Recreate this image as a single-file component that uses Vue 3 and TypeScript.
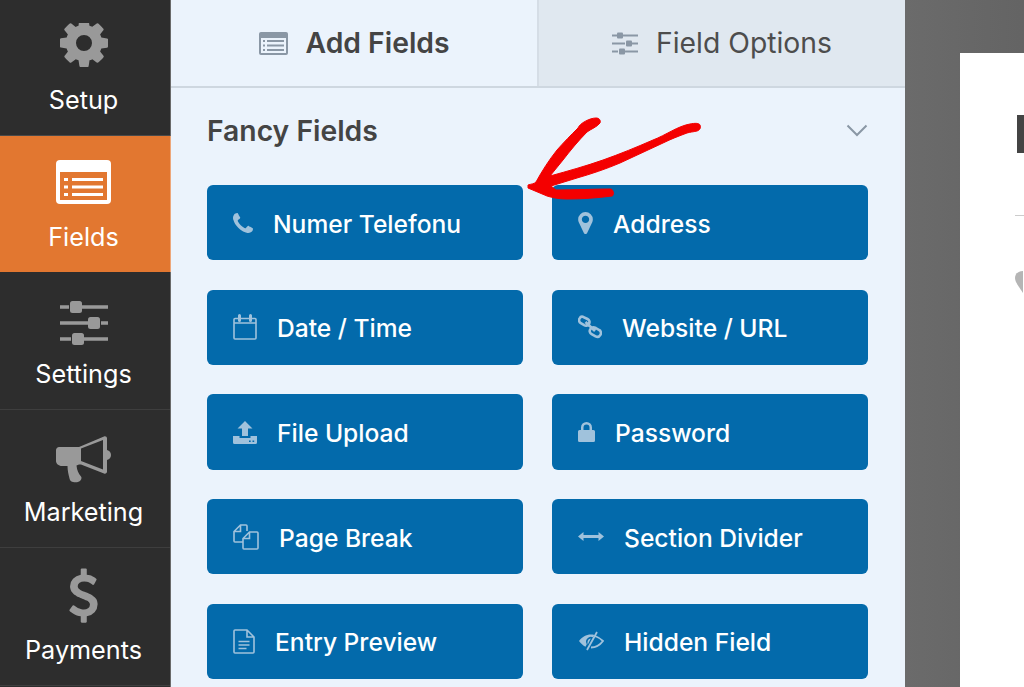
<script setup lang="ts">
interface IField {
  label: string
  w: number
  h: number
  vb: string
  fill?: string
  line?: string
  sw?: number
}

const phone = 'M1408 1112q0 27-10 70.5t-21 68.5q-21 50-122 106-94 51-186 51-27 0-53-3.5t-57.5-12.5-47-14.5-55.5-20.5-49-18q-98-35-175-83-127-79-264-216t-216-264q-48-77-83-175-3-9-18-49t-20.5-55.5-14.5-47-12.5-57.5-3.5-53q0-92 51-186 56-101 106-122 25-11 68.5-21t70.5-10q14 0 21 3 18 6 53 76 11 19 30 54t35 63.5 31 53.5q3 4 17.5 25t21.5 35.5 7 28.5q0 20-28.5 50t-62 55-62 53-28.5 46q0 9 5 22.5t8.5 20.5 14 24 11.5 19q76 137 174 235t235 174q2 1 19 11.5t24 14 20.5 8.5 22.5 5q18 0 46-28.5t53-62 55-62 50-28.5q14 0 28.5 7t35.5 21.5 25 17.5q25 15 53.5 31t63.5 35 54 30q70 35 76 53 3 7 3 21z'
const marker = 'M768 640q0-106-75-181t-181-75-181 75-75 181 75 181 181 75 181-75 75-181zm256 0q0 109-33 179l-364 774q-16 33-47.5 52t-67.5 19-67.5-19-46.5-52l-365-774q-33-70-33-179 0-212 150-362t362-150 362 150 150 362z'
const cog = 'M1024 640q0-106-75-181t-181-75-181 75-75 181 75 181 181 75 181-75 75-181zm512-109v222q0 12-8 23t-20 13l-185 28q-19 54-39 91 35 50 107 138 10 12 10 25t-9 23q-27 37-99 108t-94 71q-12 0-26-9l-138-108q-44 23-91 38-16 136-29 186-7 28-36 28h-222q-14 0-24.5-8.5t-11.5-21.5l-28-184q-49-16-90-37l-141 107q-10 9-25 9-14 0-25-11-126-114-165-168-7-10-7-23 0-12 8-23 15-21 51-66.5t54-70.5q-27-50-41-99l-183-27q-13-2-21-12.5t-8-23.5v-222q0-12 8-23t19-13l186-28q14-46 39-92-40-57-107-138-10-12-10-24 0-10 9-23 26-36 98.5-107.5t94.5-71.5q13 0 26 10l138 107q44-23 91-38 16-136 29-186 7-28 36-28h222q14 0 24.5 8.5t11.5 21.5l28 184q49 16 90 37l142-107q9-9 24-9 13 0 25 10 129 119 165 170 7 8 7 22 0 12-8 23-15 21-51 66.5t-54 70.5q26 50 41 98l183 28q13 2 21 12.5t8 23.5z'
const dollar = 'M978 1185q0 153-99.5 263.5t-258.5 136.5v175q0 14-9 23t-23 9h-135q-13 0-22.5-9.5t-9.5-22.5v-175q-66-9-127.5-31t-101.5-44.5-74-48-46.5-37.5-17.5-18q-17-21-2-41l103-135q7-10 23-12 15-2 24 9l2 2q113 99 243 125 37 8 74 8 81 0 142.5-43t61.5-122q0-28-15-53t-33.5-42-58.5-37.5-66-32-80-32.5q-39-16-61.5-25t-61.5-26.5-62.5-31-56.5-35.5-53.5-42.5-43.5-49-35.5-58-21-66.5-8.5-78q0-138 98-242t255-134v-180q0-13 9.5-22.5t22.5-9.5h135q14 0 23 9t9 23v176q57 6 110.5 23t87 33.5 63.5 37.5 39 29 15 14q17 18 5 38l-81 146q-8 15-23 16-14 3-27-7-3-3-14.5-12t-39-26.5-58.5-32-74.5-26-85.5-11.5q-95 0-155 43t-60 111q0 26 8.5 48t29.5 41.5 39.5 33 56 31 60.5 27 70 27.5q53 20 81 31.5t76 35 75.5 42.5 62 50 53 63.5 31.5 76.5 13 94z'

const fieldList: IField[] = [
  { label: 'Numer Telefonu', w: 20, h: 20, vb: '0 0 1408 1408', fill: phone },
  { label: 'Address', w: 15, h: 22, vb: '0 128 1024 1536', fill: marker },
  {
    label: 'Date / Time', w: 24, h: 26, vb: '0 0 24 26', sw: 1.6,
    line: 'M2 4.5h20a1 1 0 0 1 1 1v18.5a1 1 0 0 1-1 1H2a1 1 0 0 1-1-1V5.5a1 1 0 0 1 1-1zM1 9h22',
    fill: 'M5 1.500a1.500 1.500 0 0 1 3 0v5a1.500 1.500 0 0 1-3 0zM16 1.500a1.500 1.500 0 0 1 3 0v5a1.500 1.500 0 0 1-3 0z'
  },
  {
    label: 'Website / URL', w: 24, h: 24, vb: '0 0 24 24', sw: 2.6,
    line: 'M5 1.800l4.500 2.200c2 1 2.500 3 1.500 4.800-1 1.800-3 2.400-4.800 1.400L2.800 8.200C1 7.200.6 5 1.600 3.300 2.400 1.800 3.500 1.300 5 1.800zM15 13.500l3.500 0M17.800 13l3.400 2c1.800 1 2.200 3.200 1.200 4.900-1 1.700-3 2.400-4.800 1.400l-4-2.200c-1.800-1-2.400-3-1.400-4.800 1-1.700 3.400-2.300 5.600-1.300zM7.500 7l9.500 9'
  },
  {
    label: 'File Upload', w: 24, h: 23, vb: '0 0 24 23',
    fill: 'M12 0l7.500 7.500h-4.500v7.500h-6V7.500H4.500zM0 15h6.500v2h11v-2H24v6.500a1.500 1.500 0 0 1-1.500 1.500h-21A1.500 1.500 0 0 1 0 21.500zM16 19.500v1.500h1.700v-1.500zM19.500 19.500v1.500h1.700v-1.500z'
  },
  {
    label: 'Password', w: 17, h: 20, vb: '0 0 17 20',
    fill: 'M3 8V5.500a5.500 5.500 0 0 1 11 0V8h1.500A1.500 1.500 0 0 1 17 9.500v9a1.500 1.500 0 0 1-1.500 1.500h-14A1.500 1.500 0 0 1 0 18.500v-9A1.500 1.500 0 0 1 1.500 8zM5.500 8h6V5.500a3 3 0 0 0-6 0z'
  },
  {
    label: 'Page Break', w: 26, h: 26, vb: '0 0 26 26', sw: 1.6,
    line: 'M10 18H2a1 1 0 0 1-1-1V7.500L7.500 1H13a1 1 0 0 1 1 1v5M7.500 1.500V7.500H1.500M11 25a1 1 0 0 1-1-1V14.500L16.500 8H24a1 1 0 0 1 1 1v15a1 1 0 0 1-1 1zM16.500 8.500V14.500H10.500'
  },
  {
    label: 'Section Divider', w: 26, h: 9, vb: '0 0 26 9',
    fill: 'M0 4.500L5.500 0v3h15V0L26 4.500 20.500 9V6h-15v3z'
  },
  {
    label: 'Entry Preview', w: 22, h: 25, vb: '0 0 22 25', sw: 1.6,
    line: 'M2 1h12l7 7v15a1 1 0 0 1-1 1H2a1 1 0 0 1-1-1V2a1 1 0 0 1 1-1zM14 1v7h7M5.500 12.500h11M5.500 16h11M5.500 19.500h8'
  },
  {
    label: 'Hidden Field', w: 26, h: 20, vb: '0 0 26 20', sw: 1.8,
    line: 'M17 5c3.500 1.300 6 3 8 5-3 4-7 6.500-12 6.500M19 1L9 19',
    fill: 'M1 10c3-4 7-6.500 12-6.500 1.200 0 2.300.1 3.400.4L15 6.300A5 5 0 0 0 8 10c0 1.200.3 2.300.8 3.300L7.500 15.800C5 14.600 2.800 12.400 1 10zM10 9.300c.6-1 1.600-1.600 2.800-1.700l-3 6c-.5-1.500-.4-3 .2-4.300z'
  }
]
</script>

<template>
  <div class="builder">
    <aside class="sidebar">
      <div class="side-item side-item--first">
        <svg class="side-icon" width="48" height="48" viewBox="0 0 1536 1536"><path :d="cog" fill="currentColor" /></svg>
        <span>Setup</span>
      </div>
      <div class="side-item side-item--active">
        <svg class="side-icon" width="55" height="44" viewBox="0 0 55 44">
          <rect width="55" height="44" rx="4" fill="#fff" />
          <rect x="4" y="12" width="47" height="28" fill="#e27730" />
          <path d="M8 18h4v3H8zM8 25.500h4v3H8zM8 33h4v3H8zM16 18h31v3H16zM16 25.500h31v3H16zM16 33h31v3H16z" fill="#fff" />
        </svg>
        <span>Fields</span>
      </div>
      <div class="side-item">
        <svg class="side-icon" width="48" height="46" viewBox="0 0 48 46">
          <path d="M0 6h9M22 6h26M0 22h28M41 22h7M0 38h11M24 38h24" stroke="currentColor" stroke-width="3.500" />
          <rect x="10" y="0" width="12" height="12" rx="2.500" fill="currentColor" />
          <rect x="28" y="16" width="12" height="12" rx="2.500" fill="currentColor" />
          <rect x="12" y="32" width="12" height="12" rx="2.500" fill="currentColor" />
        </svg>
        <span>Settings</span>
      </div>
      <div class="side-item">
        <svg class="side-icon side-icon--market" width="55" height="47" viewBox="0 0 55 47">
          <path fill="currentColor" fill-rule="evenodd" d="M3 11h20L48 .5c1.500-.6 3 .3 3 2V14c2.500.5 4 2.500 4 5s-1.500 4.500-4 5v11.500c0 1.700-1.500 2.600-3 2L25 28.500h-2l-2.500 1c.5 5 2 8 4.500 11 1 1.500 .5 3-1 4.500-2 1.500-4.500 1.500-7 1-2.500-.5-3-1.500-3.500-3.500-1-4-2-8-2-12.500H6c-3.500 0-6-2.500-6-5V14c0-1.500 1.500-3 3-3zM25 12.500V25L47 33.500V4z" />
        </svg>
        <span>Marketing</span>
      </div>
      <div class="side-item">
        <svg class="side-icon side-icon--money" width="31" height="59" viewBox="0 0 1024 1792"><path :d="dollar" fill="currentColor" /></svg>
        <span>Payments</span>
      </div>
    </aside>

    <main class="panel">
      <div class="tabs">
        <div class="tab tab--active">
          <svg width="29" height="23" viewBox="0 0 29 23">
            <rect width="29" height="23" rx="2" fill="currentColor" />
            <rect x="2" y="6" width="25" height="15" fill="#ebf3fc" />
            <path d="M4 8h2v2H4zM4 12.500h2v2H4zM4 17h2v2H4zM8 8h17v2H8zM8 12.500h17v2H8zM8 17h17v2H8z" fill="currentColor" />
          </svg>
          <span>Add Fields</span>
        </div>
        <div class="tab">
          <svg width="26" height="23" viewBox="0 0 26 23">
            <path d="M0 3.500h5M11 3.500h15M0 11.500h13M19 11.500h7M0 19.500h6M12 19.500h14" stroke="currentColor" stroke-width="2" />
            <rect x="5" y="0.500" width="6" height="6" rx="1" fill="currentColor" />
            <rect x="14" y="8.500" width="6" height="6" rx="1" fill="currentColor" />
            <rect x="7" y="16.500" width="6" height="6" rx="1" fill="currentColor" />
          </svg>
          <span>Field Options</span>
        </div>
      </div>

      <div class="section">
        <div class="section__head">
          <h2>Fancy Fields</h2>
          <svg width="22" height="13" viewBox="0 0 22 13"><path d="M1.500 1.500L11 11l9.500-9.500" fill="none" stroke="currentColor" stroke-width="2" /></svg>
        </div>
        <div class="field-grid">
          <button v-for="item in fieldList" :key="item.label" class="field-btn">
            <svg :width="item.w" :height="item.h" :viewBox="item.vb">
              <path v-if="item.fill" :d="item.fill" fill="currentColor" fill-rule="evenodd" />
              <path v-if="item.line" :d="item.line" fill="none" stroke="currentColor" :stroke-width="item.sw" />
            </svg>
            <span>{{ item.label }}</span>
          </button>
        </div>
      </div>
    </main>

    <section class="preview">
      <div class="sheet">
        <div class="sheet__title"></div>
        <div class="sheet__rule"></div>
        <svg class="sheet__blob" width="8" height="26" viewBox="0 0 8 26"><path d="M8 0C3 0 0 3 0 7c0 3 2 6 4 9l4 6z" fill="#b5b5b5" /></svg>
      </div>
    </section>

    <svg class="arrow" width="1024" height="687" viewBox="0 0 1024 687">
      <path
        fill="#f40000"
        stroke="#f40000"
        stroke-width="1"
        stroke-linejoin="round"
        d="M596 118C599 118 601 120 600 123C597 127 591 129 587 132C578 141 570 151 563 160L550 176C568 171 586 166 603 160C620 154 637 147 653 140C666 135 678 126 690 124C695 123 699 123 700 125C701 128 700 130 697 131C693 132 690 132 687 133C679 136 671 139 663 143L620 163C606 169 591 174 577 178L551 186L556 190C575 190 594 189 611 189C614 190 614 196 612 196C597 198 582 199 567 199C560 199 553 198 547 196L528 188L528 185C531 184 534 184 536 182C542 171 549 160 557 150C564 142 571 135 578 128C580 123 590 118 596 118Z"
      />
    </svg>
  </div>
</template>

<style scoped>
.builder {
  display: flex;
  position: relative;
  width: 1024px;
  height: 687px;
  overflow: hidden;
  font-family: Inter, "Liberation Sans", sans-serif;
}
.sidebar {
  width: 171px;
  flex: none;
  background-color: #2d2d2d;
  border-right: 1px solid #6a6a6a;
  box-sizing: border-box;
}
.side-item {
  height: 138px;
  box-sizing: border-box;
  display: flex;
  flex-direction: column;
  align-items: center;
  border-bottom: 1px solid #3e3e3e;
  padding: 29px 3px 0 0;
  color: #999;
}
.side-item span {
  color: #fff;
  font-size: 25.2px;
  line-height: 30px;
  margin-top: auto;
  margin-bottom: 20px;
}
.side-icon--market {
  margin-top: -3px;
}
.side-icon--money {
  margin-top: -11px;
}
.side-item--first {
  height: 136px;
  padding-top: 23px;
  border-bottom: 1px solid #4a4a4a;
}
.side-item--active {
  height: 136px;
  padding-top: 24px;
  background-color: #e27730;
  border-bottom: none;
  box-shadow: 1px 0 0 #eda77a;
}
.panel {
  width: 734px;
  flex: none;
  background-color: #ebf3fc;
}
.tabs {
  display: flex;
  height: 88px;
  box-sizing: border-box;
  border-bottom: 2px solid #ced7e0;
}
.tab {
  flex: 1;
  display: flex;
  align-items: center;
  justify-content: center;
  gap: 18px;
  font-size: 28.3px;
  background-color: #e0e8f0;
  color: #4d4d4d;
}
.tab svg {
  color: #8a97a5;
}
.tab--active {
  background-color: #ebf3fc;
  border-right: 2px solid #d5dde6;
  font-weight: 600;
  color: #444;
}
.section {
  padding: 0 37px 0 36px;
}
.section__head {
  display: flex;
  justify-content: space-between;
  align-items: center;
  height: 82px;
  padding-top: 3px;
  box-sizing: border-box;
  color: #8a97a5;
}
.section__head h2 {
  margin: 0;
  font-size: 28.3px;
  font-weight: 600;
  color: #444;
}
.field-grid {
  display: grid;
  grid-template-columns: 1fr 1fr;
  column-gap: 29px;
  row-gap: 29.4px;
  margin-top: 15px;
}
.field-btn {
  display: flex;
  align-items: center;
  gap: 20px;
  height: 75.3px;
  padding: 0 26px;
  border: none;
  border-radius: 6px;
  background-color: #036aab;
  color: #fff;
  font-family: inherit;
  font-size: 24.6px;
  font-weight: 500;
}
.field-btn span {
  padding-top: 2px;
}
.field-btn svg {
  flex: none;
  color: #a0c2dc;
}
.preview {
  flex: 1;
  background: linear-gradient(90deg, #6b6b6b, #636363);
  padding: 53px 0 0 55px;
}
.sheet {
  height: 100%;
  background-color: #fff;
  display: flex;
  flex-direction: column;
  align-items: flex-start;
  padding: 62px 0 0 57px;
  box-sizing: border-box;
}
.sheet__title {
  width: 20px;
  height: 38px;
  background-color: #444;
}
.sheet__rule {
  width: 20px;
  height: 1px;
  margin: 62px 0 0 -2px;
  background-color: #ccc;
}
.sheet__blob {
  margin: 55px 0 0 -2px;
}
.arrow {
  position: absolute;
  left: 0;
  top: 0;
  pointer-events: none;
}
</style>
